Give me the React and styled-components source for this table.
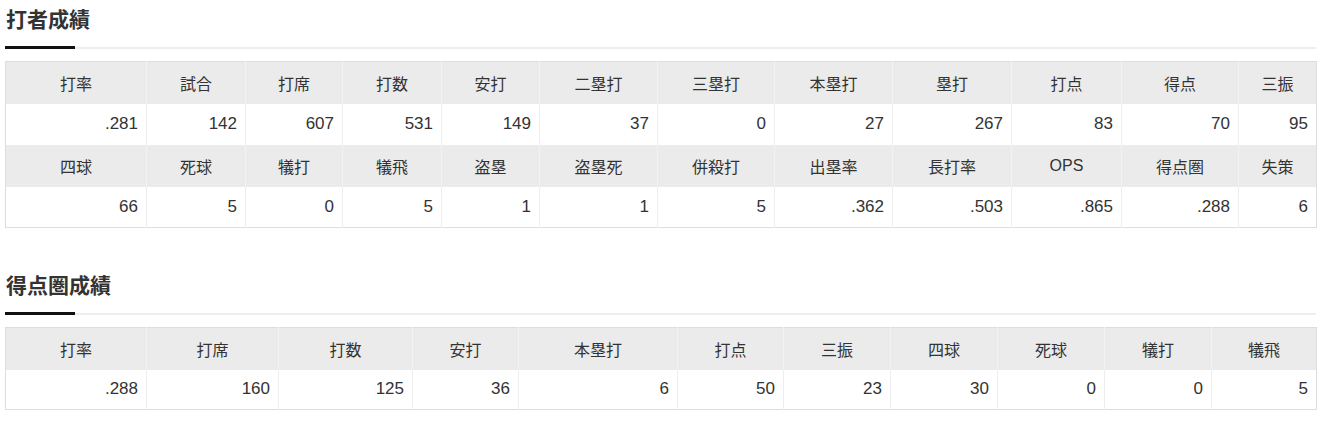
import React from "react";
import styled, { createGlobalStyle } from "styled-components";

const Global = createGlobalStyle`
  html, body { margin: 0; padding: 0; background: #fff; }
  body {
    font-family: "Liberation Sans", "Noto Sans CJK JP", sans-serif;
    color: #333;
  }
`;

const Page = styled.div`
  padding: 3px 10px 0 5px;
  width: 1311px;
`;

const Section = styled.section`
  margin-bottom: 41px;
  &:last-child { margin-bottom: 0; }
`;

const Heading = styled.h2`
  margin: 0 0 0 1px;
  font-family: "Noto Sans CJK JP", sans-serif;
  font-size: 21px;
  font-weight: 700;
  line-height: 30px;
  color: #333;
`;

const Rule = styled.div`
  display: flex;
  align-items: center;
  margin-top: 13px;
  height: 3px;
`;

const RuleMark = styled.div`
  width: 70px;
  height: 3px;
  background: #111;
`;

const RuleLine = styled.div`
  flex: 1;
  height: 2px;
  background: #eeeeee;
`;

const Table = styled.table`
  margin-top: 12px;
  width: 1311px;
  table-layout: fixed;
  border-collapse: collapse;
  border: 1px solid #dddddd;
  font-size: 16px;
`;

const Col = styled.col`
  width: ${(p) => p.$w}px;
`;

const HeadRow = styled.tr`
  height: 42px;
  background: #ebebeb;
`;

const DataRow = styled.tr`
  height: ${(p) => p.$h}px;
  background: #fff;
`;

const Th = styled.th`
  padding: 0 8px;
  font-weight: 400;
  text-align: center;
  color: #333;
  border-left: 1px solid #f3f3f3;
  font-family: "Liberation Sans", "Noto Sans CJK JP", sans-serif;
  &:first-child { border-left: 1px solid #dddddd; }
`;

const Td = styled.td`
  padding: 0 8px;
  font-size: 17px;
  text-align: right;
  color: #333;
  border-left: 1px solid #eeeeee;
  &:first-child { border-left: 1px solid #dddddd; }
`;

const batting = {
  widths: [141, 99, 97, 99, 98, 118, 117, 118, 119, 110, 117, 78],
  blocks: [
    {
      head: ["打率", "試合", "打席", "打数", "安打", "二塁打", "三塁打", "本塁打", "塁打", "打点", "得点", "三振"],
      data: [".281", "142", "607", "531", "149", "37", "0", "27", "267", "83", "70", "95"],
    },
    {
      head: ["四球", "死球", "犠打", "犠飛", "盗塁", "盗塁死", "併殺打", "出塁率", "長打率", "OPS", "得点圏", "失策"],
      data: ["66", "5", "0", "5", "1", "1", "5", ".362", ".503", ".865", ".288", "6"],
    },
  ],
};

const scoring = {
  widths: [141, 132, 134, 106, 159, 106, 107, 107, 107, 107, 105],
  blocks: [
    {
      head: ["打率", "打席", "打数", "安打", "本塁打", "打点", "三振", "四球", "死球", "犠打", "犠飛"],
      data: [".288", "160", "125", "36", "6", "50", "23", "30", "0", "0", "5"],
    },
  ],
};

function StatTable({ spec, dataHeight }) {
  return (
    <Table>
      <colgroup>
        {spec.widths.map((w, i) => (
          <Col key={i} $w={w} />
        ))}
      </colgroup>
      <tbody>
        {spec.blocks.map((b, bi) => (
          <React.Fragment key={bi}>
            <HeadRow>
              {b.head.map((h, i) => (
                <Th key={i}>{h}</Th>
              ))}
            </HeadRow>
            <DataRow $h={dataHeight}>
              {b.data.map((d, i) => (
                <Td key={i}>{d}</Td>
              ))}
            </DataRow>
          </React.Fragment>
        ))}
      </tbody>
    </Table>
  );
}

function StatSection({ title, spec, dataHeight }) {
  return (
    <Section>
      <Heading>{title}</Heading>
      <Rule>
        <RuleMark />
        <RuleLine />
      </Rule>
      <StatTable spec={spec} dataHeight={dataHeight} />
    </Section>
  );
}

export default function App() {
  return (
    <>
      <Global />
      <Page>
        <StatSection title="打者成績" spec={batting} dataHeight={41} />
        <StatSection title="得点圏成績" spec={scoring} dataHeight={40} />
      </Page>
    </>
  );
}
